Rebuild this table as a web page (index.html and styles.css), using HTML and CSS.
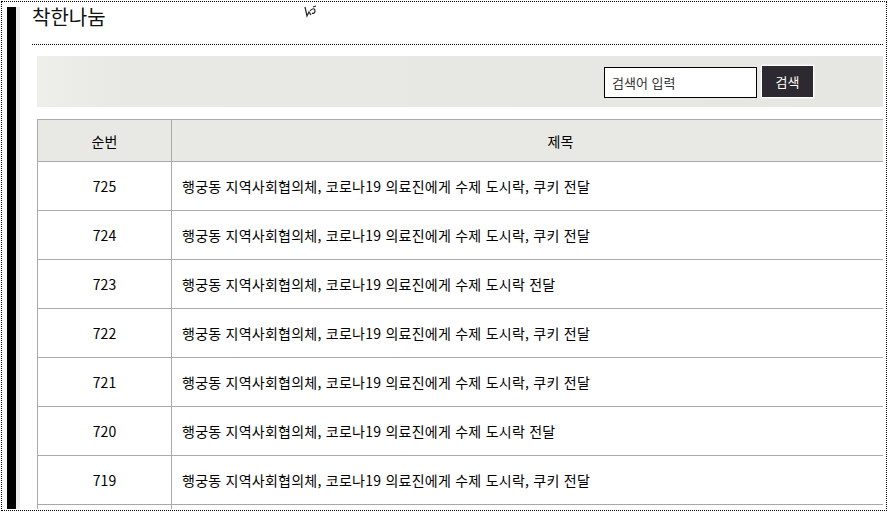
FILE: index.html
```html
<!DOCTYPE html>
<html lang="ko">
<head>
  <meta charset="UTF-8" />
  <meta name="viewport" content="width=device-width, initial-scale=1" />
  <title>착한나눔</title>
  <link rel="stylesheet" href="styles.css">
</head>
<body>

<div class="frame">
  <div class="side-bar"></div>
  <div class="side-strip"></div>

  <div class="content">
    <h2 class="page-title">착한나눔</h2>

    <form class="search-box" onsubmit="return false">
      <input class="search-input" type="text" placeholder="검색어 입력" />
      <button class="search-btn" type="submit">검색</button>
    </form>

    <table class="board">
      <thead>
        <tr>
          <th class="col-no">순번</th>
          <th class="col-title">제목</th>
        </tr>
      </thead>
      <tbody>
        <tr><td class="col-no">725</td><td class="col-title">행궁동 지역사회협의체, 코로나19 의료진에게 수제 도시락, 쿠키 전달</td></tr>
        <tr><td class="col-no">724</td><td class="col-title">행궁동 지역사회협의체, 코로나19 의료진에게 수제 도시락, 쿠키 전달</td></tr>
        <tr><td class="col-no">723</td><td class="col-title">행궁동 지역사회협의체, 코로나19 의료진에게 수제 도시락 전달</td></tr>
        <tr><td class="col-no">722</td><td class="col-title">행궁동 지역사회협의체, 코로나19 의료진에게 수제 도시락, 쿠키 전달</td></tr>
        <tr><td class="col-no">721</td><td class="col-title">행궁동 지역사회협의체, 코로나19 의료진에게 수제 도시락, 쿠키 전달</td></tr>
        <tr><td class="col-no">720</td><td class="col-title">행궁동 지역사회협의체, 코로나19 의료진에게 수제 도시락 전달</td></tr>
        <tr><td class="col-no">719</td><td class="col-title">행궁동 지역사회협의체, 코로나19 의료진에게 수제 도시락, 쿠키 전달</td></tr>
        <!-- next row is scrolled out of the capture -->
        <tr><td class="col-no"></td><td class="col-title"></td></tr>
      </tbody>
    </table>
  </div>

  <!-- mouse pointer left in the capture -->
  <svg class="cursor" width="14" height="14" viewBox="0 0 14 14">
    <path d="M1 2 L3 11 L5 7 L7 10 M6 6 C8 3 11 3 11 6 C11 8 9 9 8 8 M9 2 L12 1" fill="none" stroke="#222" stroke-width="1.2"/>
  </svg>
</div>

</body>
</html>
```

FILE: styles.css
```css
body {
  margin: 0;
  background: #fff;
  font-family: "Noto Sans CJK KR", "Noto Sans", sans-serif;
  color: #000;
}
.frame {
  position: relative;
  display: flex;
  margin: 1px;
  width: 886px;
  height: 510px;
  box-sizing: border-box;
  border: 1px dotted #000;
  padding: 0 3px 1px 5px;
  overflow: hidden;
}
.side-bar {
  flex: 0 0 9px;
  margin-top: 5px;
  background: #000;
}
.side-strip {
  flex: 0 0 4px;
  margin-top: 5px;
  background: #ededed;
}
.content {
  flex: 1;
  min-width: 0;
  padding-left: 12px;
  overflow: hidden;
}
.page-title {
  margin: 0;
  height: 43px;
  box-sizing: border-box;
  border-bottom: 1px dotted #000;
  font-size: 20px;
  font-weight: 400;
  line-height: 29px;
  color: #111;
}
.search-box {
  display: flex;
  justify-content: flex-end;
  align-items: center;
  gap: 5px;
  margin: 11px 0 0 5px;
  height: 51px;
  padding-right: 70px;
  background: linear-gradient(90deg, #eeeeeb 0%, #e8e8e4 10%, #e6e6e2 100%);
}
.search-input {
  width: 153px;
  height: 31px;
  box-sizing: border-box;
  margin-top: 2px;
  border: 1px solid #000;
  padding: 0 7px;
  font-family: inherit;
  font-size: 13px;
  color: #333;
  outline: none;
}
.search-input::placeholder {
  color: #333;
}
.search-btn {
  width: 51px;
  height: 31px;
  border: 0;
  background: #2c2a30;
  box-shadow: 0 0 0 1px #fff, 0 0 2px 1px #fff;
  color: #fff;
  font-family: inherit;
  font-size: 13px;
  font-weight: 400;
  padding: 0;
}
.board {
  margin: 12px 0 0 5px;
  width: 913px;
  border-collapse: collapse;
  font-size: 14px;
}
.board th,
.board td {
  border: 1px solid #aaa;
  padding: 0;
}
.board th {
  height: 41px;
  background: #e8e8e4;
  font-weight: 400;
}
.board td {
  height: 48px;
}
.board .col-no {
  width: 133px;
  text-align: center;
}
.board td.col-title {
  padding-left: 10px;
  letter-spacing: 0.25px;
}
.cursor {
  position: absolute;
  left: 302px;
  top: 3px;
}
```
